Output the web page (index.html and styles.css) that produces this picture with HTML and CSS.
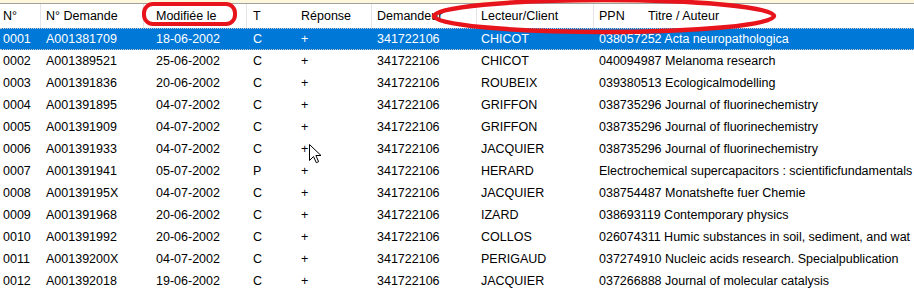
FILE: index.html
```html
<!DOCTYPE html>
<html>
<head>
<meta charset="utf-8">
<link rel="stylesheet" href="styles.css">
</head>
<body>
<div class="app">
  <div class="topstrip"></div>
  <div class="list">
    <div class="row header">
      <div class="c c1">N°</div>
      <div class="c c2 sep">N° Demande</div>
      <div class="c c3 sep">Modifiée le</div>
      <div class="c c4 sep">T</div>
      <div class="c c5">Réponse</div>
      <div class="c c6 sep">Demandeur</div>
      <div class="c c7 sep">Lecteur/Client</div>
      <div class="c c8 sep"><span class="ppn">PPN</span>Titre / Auteur</div>
    </div>
    <div class="row selected">
      <div class="c c1">0001</div><div class="c c2">A001381709</div><div class="c c3">18-06-2002</div><div class="c c4">C</div><div class="c c5">+</div><div class="c c6">341722106</div><div class="c c7">CHICOT</div><div class="c c8">038057252 Acta neuropathologica</div>
    </div>
    <div class="row">
      <div class="c c1">0002</div><div class="c c2">A001389521</div><div class="c c3">25-06-2002</div><div class="c c4">C</div><div class="c c5">+</div><div class="c c6">341722106</div><div class="c c7">CHICOT</div><div class="c c8">040094987 Melanoma research</div>
    </div>
    <div class="row">
      <div class="c c1">0003</div><div class="c c2">A001391836</div><div class="c c3">20-06-2002</div><div class="c c4">C</div><div class="c c5">+</div><div class="c c6">341722106</div><div class="c c7">ROUBEIX</div><div class="c c8">039380513 Ecologicalmodelling</div>
    </div>
    <div class="row">
      <div class="c c1">0004</div><div class="c c2">A001391895</div><div class="c c3">04-07-2002</div><div class="c c4">C</div><div class="c c5">+</div><div class="c c6">341722106</div><div class="c c7">GRIFFON</div><div class="c c8">038735296 Journal of fluorinechemistry</div>
    </div>
    <div class="row">
      <div class="c c1">0005</div><div class="c c2">A001391909</div><div class="c c3">04-07-2002</div><div class="c c4">C</div><div class="c c5">+</div><div class="c c6">341722106</div><div class="c c7">GRIFFON</div><div class="c c8">038735296 Journal of fluorinechemistry</div>
    </div>
    <div class="row">
      <div class="c c1">0006</div><div class="c c2">A001391933</div><div class="c c3">04-07-2002</div><div class="c c4">C</div><div class="c c5">+</div><div class="c c6">341722106</div><div class="c c7">JACQUIER</div><div class="c c8">038735296 Journal of fluorinechemistry</div>
    </div>
    <div class="row">
      <div class="c c1">0007</div><div class="c c2">A001391941</div><div class="c c3">05-07-2002</div><div class="c c4">P</div><div class="c c5">+</div><div class="c c6">341722106</div><div class="c c7">HERARD</div><div class="c c8">Electrochemical supercapacitors : scientificfundamentals</div>
    </div>
    <div class="row">
      <div class="c c1">0008</div><div class="c c2">A00139195X</div><div class="c c3">04-07-2002</div><div class="c c4">C</div><div class="c c5">+</div><div class="c c6">341722106</div><div class="c c7">JACQUIER</div><div class="c c8">038754487 Monatshefte fuer Chemie</div>
    </div>
    <div class="row">
      <div class="c c1">0009</div><div class="c c2">A001391968</div><div class="c c3">20-06-2002</div><div class="c c4">C</div><div class="c c5">+</div><div class="c c6">341722106</div><div class="c c7">IZARD</div><div class="c c8">038693119 Contemporary physics</div>
    </div>
    <div class="row">
      <div class="c c1">0010</div><div class="c c2">A001391992</div><div class="c c3">20-06-2002</div><div class="c c4">C</div><div class="c c5">+</div><div class="c c6">341722106</div><div class="c c7">COLLOS</div><div class="c c8">026074311 Humic substances in soil, sediment, and wat</div>
    </div>
    <div class="row">
      <div class="c c1">0011</div><div class="c c2">A00139200X</div><div class="c c3">04-07-2002</div><div class="c c4">C</div><div class="c c5">+</div><div class="c c6">341722106</div><div class="c c7">PERIGAUD</div><div class="c c8">037274910 Nucleic acids research. Specialpublication</div>
    </div>
    <div class="row">
      <div class="c c1">0012</div><div class="c c2">A001392018</div><div class="c c3">19-06-2002</div><div class="c c4">C</div><div class="c c5">+</div><div class="c c6">341722106</div><div class="c c7">JACQUIER</div><div class="c c8">037266888 Journal of molecular catalysis</div>
    </div>
  </div>

  <svg class="annot" width="914" height="290" viewBox="0 0 914 290">
    <rect x="144" y="4" width="91" height="20" rx="9" ry="9" fill="none" stroke="#e8141c" stroke-width="4"/>
    <ellipse cx="604" cy="16" rx="170" ry="16" fill="none" stroke="#e8141c" stroke-width="4.5"/>
  </svg>

  <svg class="cursor" width="13" height="20" viewBox="0 0 13 20">
    <path d="M0.5 0.5 L0.5 16.5 L4.5 12.5 L7.3 18.7 L9.6 17.7 L6.9 11.5 L12 11.5 Z" fill="#fff" stroke="#000" stroke-width="1" stroke-linejoin="miter"/>
  </svg>
</div>
</body>
</html>
```
FILE: styles.css
```css
html, body {
  margin: 0;
  padding: 0;
  background: #fff;
}
.app {
  position: relative;
  width: 914px;
  height: 290px;
  overflow: hidden;
  font-family: "Liberation Sans", Arial, sans-serif;
  font-size: 12.5px;
  color: #000;
}
.topstrip {
  height: 3px;
  background: #fdf8dc;
  border-bottom: 1px solid #a0a0a0;
}
.list {
  display: flex;
  flex-direction: column;
}
.row {
  display: grid;
  grid-template-columns: 40px 103px 103px 50px 75px 105px 117px 1fr;
  height: 22px;
  line-height: 22px;
  white-space: nowrap;
}
.row.header {
  height: 24px;
  line-height: 25px;
}
.c {
  overflow: hidden;
  white-space: nowrap;
}
.c1 { padding-left: 3px; }
.c2 { padding-left: 6px; }
.c3 { padding-left: 13px; }
.c4 { padding-left: 7px; }
.c5 { padding-left: 5px; }
.c6 { padding-left: 6px; }
.c7 { padding-left: 5px; }
.c8 { padding-left: 6px; overflow: visible; }
.header .sep {
  border-left: 1px solid #e5e5e5;
}
.header .sep.c2 { padding-left: 5px; }
.header .sep.c3 { padding-left: 12px; }
.header .sep.c4 { padding-left: 6px; }
.header .sep.c6 { padding-left: 5px; }
.header .sep.c7 { padding-left: 4px; }
.header .sep.c8 { padding-left: 5px; }
.ppn {
  display: inline-block;
  width: 49px;
}
.row.selected {
  background: #0078d7;
  color: #fff;
  box-sizing: border-box;
  border-top: 1px dotted #c8c8c8;
  border-bottom: 1px dotted #c8c8c8;
  line-height: 20px;
}
.annot {
  position: absolute;
  left: 0;
  top: 0;
  pointer-events: none;
}
.cursor {
  position: absolute;
  left: 309px;
  top: 144px;
}
```
